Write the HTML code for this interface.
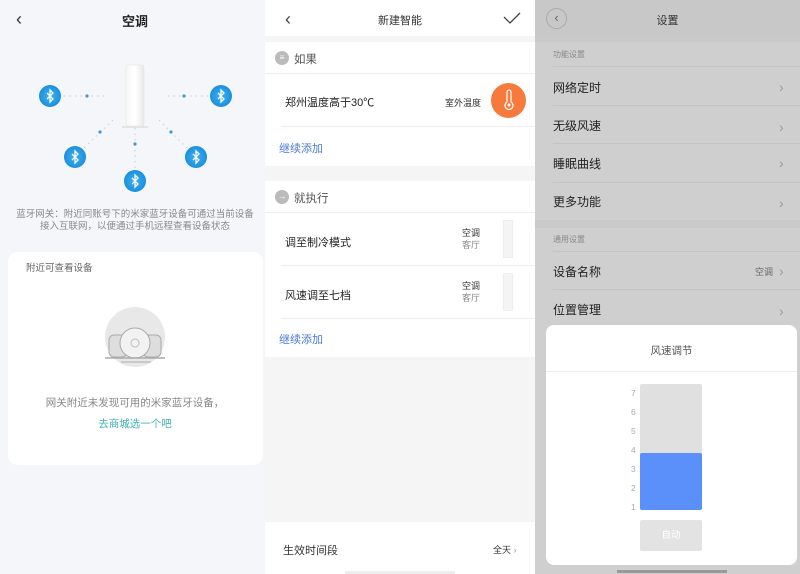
<!DOCTYPE html>
<html><head><meta charset="utf-8"><style>
*{margin:0;padding:0;box-sizing:border-box}
body{width:800px;height:574px;overflow:hidden;position:relative;font-family:"Liberation Sans","Noto Sans CJK SC",sans-serif;background:#fff}
.a{position:absolute;white-space:nowrap}
.p{position:absolute;top:0;height:574px;overflow:hidden}
</style></head><body>
<!-- LEFT -->
<div class="p" style="left:0;width:265px;background:#f5f6f9">
<div class="a" style="left:16px;top:9px;font-size:18px;color:#333">‹</div>
<div class="a" style="left:0;width:270px;text-align:center;top:11px;font-size:13px;font-weight:bold;color:#222">空调</div>
<svg class="a" style="left:0;top:0" width="265" height="200">
<defs><linearGradient id="g" x1="0" x2="1"><stop offset="0" stop-color="#f7f7f7"/><stop offset=".5" stop-color="#fff"/><stop offset="1" stop-color="#e8e8e8"/></linearGradient>
<radialGradient id="b"><stop offset="0" stop-color="#3fb2f0"/><stop offset="1" stop-color="#1b8fdc"/></radialGradient></defs>
<g stroke="#c5d6e4" stroke-width="1.2" stroke-dasharray="1.5 4" fill="none">
<line x1="64" y1="96" x2="104" y2="96"/><line x1="168" y1="96" x2="208" y2="96"/>
<line x1="113" y1="120" x2="84" y2="148"/><line x1="159" y1="120" x2="187" y2="148"/>
<line x1="135" y1="128" x2="135" y2="168"/></g>
<g fill="#3a9bd8"><circle cx="87" cy="96" r="1.6"/><circle cx="184" cy="96" r="1.6"/><circle cx="100" cy="132" r="1.6"/><circle cx="171" cy="132" r="1.6"/><circle cx="135" cy="144" r="1.6"/></g>
<rect x="126" y="65" width="18" height="61" rx="2" fill="url(#g)" stroke="#e2e2e2" stroke-width=".6"/>
<rect x="122" y="126" width="26" height="2" fill="#e4e4e4"/>
<g fill="url(#b)"><circle cx="50" cy="96" r="11"/><circle cx="221" cy="96" r="11"/><circle cx="75" cy="157" r="11"/><circle cx="196" cy="157" r="11"/><circle cx="135" cy="181" r="11"/></g>
<g stroke="#fff" stroke-width="1.3" fill="none">
<path d="M47 93l6 6-3 3v-12l3 3-6 6"/><path d="M218 93l6 6-3 3v-12l3 3-6 6"/><path d="M72 154l6 6-3 3v-12l3 3-6 6"/><path d="M193 154l6 6-3 3v-12l3 3-6 6"/><path d="M132 178l6 6-3 3v-12l3 3-6 6"/></g>
</svg>
<div class="a" style="left:0;width:270px;text-align:center;top:209px;font-size:9.5px;line-height:12px;color:#888">蓝牙网关：附近同账号下的米家蓝牙设备可通过当前设备<br>接入互联网，以便通过手机远程查看设备状态</div>
<div class="a" style="left:8px;top:252px;width:255px;height:213px;background:#fff;border-radius:10px"></div>
<div class="a" style="left:26px;top:260px;font-size:9.5px;color:#666">附近可查看设备</div>
<svg class="a" style="left:95px;top:305px" width="80" height="70">
<circle cx="40" cy="32" r="30" fill="#e8e8e8"/>
<rect x="14" y="30" width="18" height="22" rx="5" fill="#ddd" stroke="#aaa"/>
<rect x="48" y="30" width="18" height="22" rx="5" fill="#ddd" stroke="#aaa"/>
<circle cx="40" cy="38" r="15" fill="#f2f2f2" stroke="#aaa"/><circle cx="40" cy="38" r="4" fill="none" stroke="#bbb"/>
<line x1="10" y1="53" x2="70" y2="53" stroke="#aaa" stroke-width="1.4"/><line x1="26" y1="57" x2="56" y2="57" stroke="#aaa"/>
</svg>
<div class="a" style="left:0;width:270px;text-align:center;top:395px;font-size:10.5px;color:#888">网关附近未发现可用的米家蓝牙设备，</div>
<div class="a" style="left:0;width:270px;text-align:center;top:416px;font-size:10.5px;color:#3fb0b6">去商城选一个吧</div>
</div>
<!-- MIDDLE -->
<div class="p" style="left:265px;width:270px;background:#f5f5f5">
<div class="a" style="left:0;top:0;width:270px;height:36px;background:#fff"></div>
<div class="a" style="left:20px;top:9px;font-size:18px;color:#444">‹</div>
<div class="a" style="left:0;width:270px;text-align:center;top:12px;font-size:11px;color:#333">新建智能</div>
<svg class="a" style="left:238px;top:12px" width="18" height="12"><path d="M1 5l6 6 10-10" stroke="#444" stroke-width="1.3" fill="none"/></svg>
<div class="a" style="left:0;top:42px;width:270px;height:124px;background:#fff"></div>
<div class="a" style="left:0;top:73px;width:270px;height:1px;background:#eee"></div>
<div class="a" style="left:16px;top:126px;width:254px;height:1px;background:#eee"></div>
<div class="a" style="left:10px;top:51px;width:14px;height:14px;border-radius:7px;background:#bbb;color:#fff;font-size:8px;text-align:center;line-height:14px">≡</div>
<div class="a" style="left:29px;top:51px;font-size:11.5px;color:#555">如果</div>
<div class="a" style="left:20px;top:94px;font-size:11px;color:#222">郑州温度高于30℃</div>
<div class="a" style="left:180px;top:96px;font-size:9px;color:#333">室外温度</div>
<div class="a" style="left:226px;top:83px;width:35px;height:35px;border-radius:50%;background:#f57a3b"></div>
<svg class="a" style="left:238px;top:89px" width="12" height="22"><path d="M4 3a2 2 0 014 0v10a4 4 0 11-4 0z" fill="none" stroke="#fff" stroke-width="1.2"/><circle cx="6" cy="16" r="1.5" fill="#fff"/></svg>
<div class="a" style="left:14px;top:140px;font-size:11px;color:#4a7ad0">继续添加</div>
<div class="a" style="left:0;top:181px;width:270px;height:176px;background:#fff"></div>
<div class="a" style="left:0;top:212px;width:270px;height:1px;background:#eee"></div>
<div class="a" style="left:16px;top:265px;width:254px;height:1px;background:#eee"></div>
<div class="a" style="left:16px;top:318px;width:254px;height:1px;background:#eee"></div>
<div class="a" style="left:10px;top:190px;width:14px;height:14px;border-radius:7px;background:#bbb;color:#fff;font-size:9px;text-align:center;line-height:13px">→</div>
<div class="a" style="left:29px;top:190px;font-size:11.5px;color:#555">就执行</div>
<div class="a" style="left:20px;top:234px;font-size:11px;color:#222">调至制冷模式</div>
<div class="a" style="left:197px;top:227px;font-size:9px;line-height:12px;color:#333">空调<br><span style="color:#888">客厅</span></div>
<div class="a" style="left:238px;top:220px;width:10px;height:38px;background:#f4f4f4;border:1px solid #eee"></div>
<div class="a" style="left:20px;top:287px;font-size:11px;color:#222">风速调至七档</div>
<div class="a" style="left:197px;top:280px;font-size:9px;line-height:12px;color:#333">空调<br><span style="color:#888">客厅</span></div>
<div class="a" style="left:238px;top:273px;width:10px;height:38px;background:#f4f4f4;border:1px solid #eee"></div>
<div class="a" style="left:14px;top:331px;font-size:11px;color:#4a7ad0">继续添加</div>
<div class="a" style="left:0;top:522px;width:270px;height:52px;background:#fff"></div>
<div class="a" style="left:18px;top:542px;font-size:11px;color:#333">生效时间段</div>
<div class="a" style="left:228px;top:543px;font-size:9px;color:#333">全天 <span style="color:#999">›</span></div>
<div class="a" style="left:80px;top:571px;width:110px;height:3px;background:#eee"></div>
</div>
<!-- RIGHT -->
<div class="p" style="left:535px;width:265px;background:#cfcfcf">
<div class="a" style="left:0;top:0;width:265px;height:36px;background:#c8c8c8"></div>
<div class="a" style="left:11px;top:8px;width:21px;height:21px;border-radius:50%;border:1px solid #aaa;font-size:13px;color:#666;text-align:center;line-height:18px">‹</div>
<div class="a" style="left:0;width:265px;text-align:center;top:12px;font-size:11px;color:#333">设置</div>
<div class="a" style="left:0;top:36px;width:265px;height:6px;background:#c9c9c9"></div>
<div class="a" style="left:0;top:220px;width:265px;height:8px;background:#c9c9c9"></div>
<div class="a" style="left:18px;top:49px;font-size:8px;color:#888">功能设置</div>
<div class="a" style="left:18px;top:234px;font-size:8px;color:#888">通用设置</div>
<div class="a" style="left:18px;top:79px;font-size:12px;color:#222">网络定时</div>
<div class="a" style="left:18px;top:117px;font-size:12px;color:#222">无级风速</div>
<div class="a" style="left:18px;top:155px;font-size:12px;color:#222">睡眠曲线</div>
<div class="a" style="left:18px;top:193px;font-size:12px;color:#222">更多功能</div>
<div class="a" style="left:18px;top:263px;font-size:12px;color:#222">设备名称</div>
<div class="a" style="left:18px;top:301px;font-size:12px;color:#222">位置管理</div>
<div class="a" style="left:220px;top:265px;font-size:9px;color:#666">空调</div>
<div class="a" style="left:18px;top:66px;width:247px;height:1px;background:#c4c4c4"></div>
<div class="a" style="left:18px;top:105px;width:247px;height:1px;background:#c4c4c4"></div>
<div class="a" style="left:18px;top:143px;width:247px;height:1px;background:#c4c4c4"></div>
<div class="a" style="left:18px;top:182px;width:247px;height:1px;background:#c4c4c4"></div>
<div class="a" style="left:18px;top:251px;width:247px;height:1px;background:#c4c4c4"></div>
<div class="a" style="left:18px;top:289px;width:247px;height:1px;background:#c4c4c4"></div>
<div class="a" style="left:244px;top:77px;font-size:14px;color:#999;line-height:20px">›<br><br>›</div>
<div class="a" style="left:244px;top:153px;font-size:14px;color:#999;line-height:20px">›<br><br>›</div>
<div class="a" style="left:244px;top:261px;font-size:14px;color:#999;line-height:20px">›<br><br>›</div>
<div class="a" style="left:11px;top:325px;width:251px;height:240px;background:#fff;border-radius:8px"></div>
<div class="a" style="left:11px;width:251px;text-align:center;top:343px;font-size:10.5px;color:#555">风速调节</div>
<div class="a" style="left:11px;top:371px;width:251px;height:1px;background:#eee"></div>
<div class="a" style="left:105px;top:384px;width:62px;height:126px;background:#e0e0e0;border-radius:2px"></div>
<div class="a" style="left:105px;top:453px;width:62px;height:57px;background:#5b8ff9;border-radius:2px"></div>
<div class="a" style="left:96px;top:384px;font-size:8.5px;line-height:19px;color:#aaa">7<br>6<br>5<br>4<br>3<br>2<br>1</div>
<div class="a" style="left:105px;top:520px;width:62px;height:31px;background:#e3e3e3;border-radius:2px;color:#fff;font-size:9.5px;text-align:center;line-height:31px">自动</div>
<div class="a" style="left:82px;top:570px;width:110px;height:3px;background:#999"></div>
</div>
</body></html>
